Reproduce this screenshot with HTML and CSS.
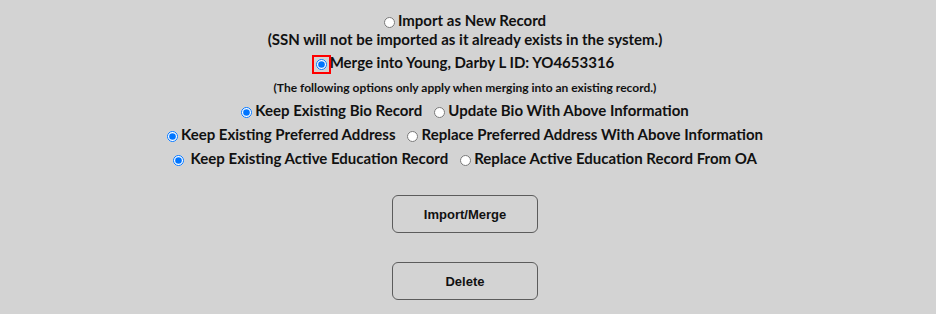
FILE: index.html
```html
<!DOCTYPE html>
<html lang="en">

<head>
  <meta charset="UTF-8">
  <title>Import Record</title>
  <link rel="stylesheet" href="styles.css">
</head>

<body>
  <div class="content">
    <div class="line first">
      <label><input type="radio" name="action"> Import as New Record</label>
    </div>
    <div class="line note">(SSN will not be imported as it already exists in the system.)</div>
    <div class="line merge">
      <label><input type="radio" name="action" class="flagged" checked> Merge into Young, Darby L ID: YO4653316</label>
    </div>
    <div class="line small">(The following options only apply when merging into an existing record.)</div>
    <div class="line opt">
      <label><input type="radio" name="bio" checked> Keep Existing Bio Record</label>
      <label><input type="radio" name="bio"> Update Bio With Above Information</label>
    </div>
    <div class="line opt">
      <label><input type="radio" name="addr" checked> Keep Existing Preferred Address</label>
      <label><input type="radio" name="addr"> Replace Preferred Address With Above Information</label>
    </div>
    <div class="line opt">
      <label><input type="radio" name="edu" checked> &nbsp;Keep Existing Active Education Record</label>
      <label><input type="radio" name="edu"> Replace Active Education Record From OA</label>
    </div>
    <div class="buttons">
      <button class="btn">Import/Merge</button>
      <button class="btn">Delete</button>
    </div>
  </div>
</body>

</html>
```

FILE: styles.css
```css
body {
  margin: 0;
  background-color: rgb(211, 211, 211);
  font-family: Lato, sans-serif;
  font-weight: bold;
  color: #111;
}

.content {
  padding: 10px 6px 0 0;
}

.line {
  display: flex;
  align-items: center;
  justify-content: center;
  gap: 12px;
  font-size: 15px;
}

.line label {
  display: flex;
  align-items: center;
  gap: 2px;
}

.first {
  height: 20px;
}

.note {
  height: 18px;
}

.merge {
  height: 28px;
}

.small {
  height: 22px;
  font-size: 12px;
}

.opt {
  height: 24px;
}

input[type="radio"] {
  width: 11px;
  height: 11px;
  margin: 0 1px 0 0;
  position: relative;
  top: 2px;
}

.flagged {
  outline: 2px solid red;
  outline-offset: 2px;
  top: 1px;
  margin-right: 3px;
}

.buttons {
  display: flex;
  flex-direction: column;
  align-items: center;
  gap: 29px;
  margin-top: 25px;
}

.btn {
  width: 146px;
  height: 38px;
  border: 1px solid #5c5c5c;
  border-radius: 6px;
  background-color: rgb(211, 211, 211);
  font-family: "Liberation Sans", Arial, sans-serif;
  font-weight: bold;
  font-size: 13px;
  color: #111;
}
```
